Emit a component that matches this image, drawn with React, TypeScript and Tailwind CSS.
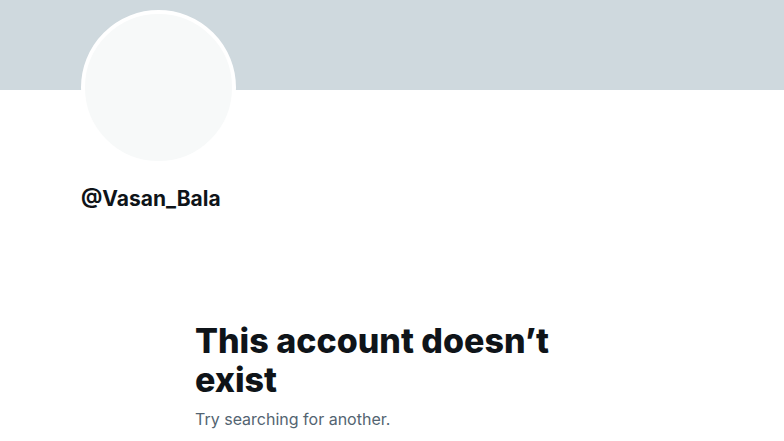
export default function App() {
  return (
    <div
      className="w-[784px] h-[441px] overflow-hidden bg-white"
      style={{ fontFamily: "Inter, 'Noto Sans', sans-serif" }}
    >
      <div className="h-[90px] bg-[#cfd9de]" />
      <div className="pl-[81px] -mt-[80px]">
        <div className="w-[155px] h-[155px] rounded-full border-4 border-white bg-[#f7f9f9]" />
        <div className="mt-[20px] text-[21px] leading-[28px] font-bold text-[#0f1419]">
          @Vasan_Bala
        </div>
      </div>
      <div className="pl-[195px] pt-[108px]">
        <h1 className="w-[380px] text-[34px] leading-[39px] font-extrabold text-[#0f1419]">
          This account doesn’t exist
        </h1>
        <p className="mt-[10px] text-[16px] leading-[20px] text-[#536471]">
          Try searching for another.
        </p>
      </div>
    </div>
  );
}
